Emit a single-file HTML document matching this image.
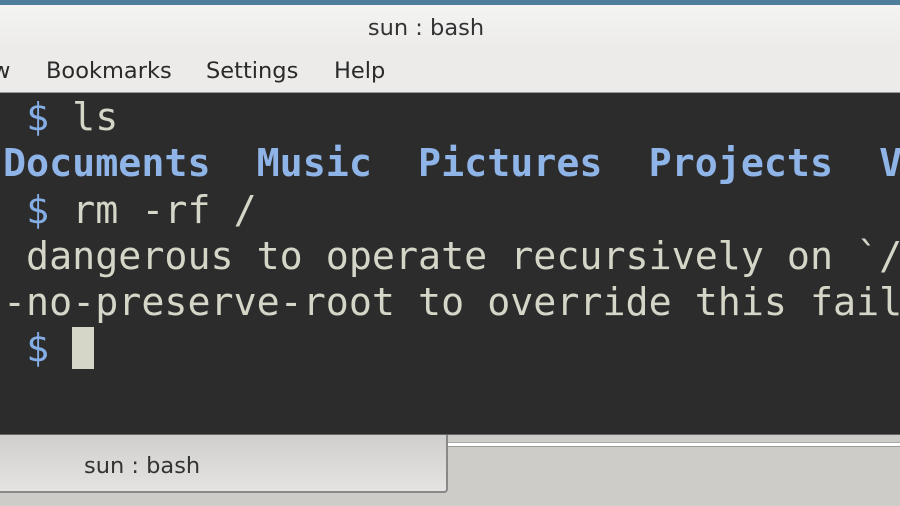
<!DOCTYPE html>
<html><head><style>
body{margin:0;width:900px;height:506px;overflow:hidden;background:#cdccc9;position:relative;font-family:"DejaVu Sans",sans-serif}
#top{position:absolute;left:0;top:0;width:900px;height:5px;background:#4e7e9c}
#title{position:absolute;left:0;top:5px;width:852px;height:43px;background:linear-gradient(#f4f4f3,#ecebea);text-align:center;line-height:46px;font-size:22.5px;color:#333}
#tbg{position:absolute;left:0;top:5px;width:900px;height:43px;background:linear-gradient(#f4f4f3,#ecebea)}
#menu{position:absolute;left:0;top:48px;width:900px;height:44px;background:#ecebea;font-size:22.5px;color:#2a2a2a;border-bottom:1px solid #999}
#menu span{position:absolute;top:10px}
#term{position:absolute;left:0;top:93px;width:900px;height:341px;background:#2c2c2c;border-bottom:1px solid #666;overflow:hidden}
pre{margin:0;position:absolute;left:3px;top:2px;font-family:"DejaVu Sans Mono",monospace;font-size:38.3px;line-height:46.3px;color:#d6d6c8;white-space:pre}
.b{color:#85aee6}.bb{color:#8fb4e8;font-weight:bold}
.cur{display:inline-block;width:22px;height:42px;background:#d6d6c8;vertical-align:-8px}
#tab{position:absolute;left:0;top:435px;width:446px;height:56px;background:linear-gradient(#d0cfcd,#e4e3e2);border-right:2px solid #888;border-bottom:2px solid #888;border-radius:0 0 4px 0;font-size:22.5px;color:#333}
#tab span{position:absolute;left:84px;top:18px}
#line{position:absolute;left:448px;top:442px;width:452px;height:3px;background:#fff;border-top:1px solid #aaa;border-bottom:1px solid #999}
</style></head><body>
<div id="top"></div>
<div id="tbg"></div>
<div id="title">sun : bash</div>
<div id="menu"><span style="left:-8px">w</span><span style="left:46px">Bookmarks</span><span style="left:206px">Settings</span><span style="left:334px">Help</span></div>
<div id="term"><pre> <span class="b">$</span> ls
<span class="bb">Documents  Music  Pictures  Projects  Videos</span>
 <span class="b">$</span> rm -rf /
 dangerous to operate recursively on `/'
-no-preserve-root to override this failsafe
 <span class="b">$</span> <span class="cur"></span></pre></div>
<div id="tab"><span>sun : bash</span></div>
<div id="line"></div>
</body></html>
